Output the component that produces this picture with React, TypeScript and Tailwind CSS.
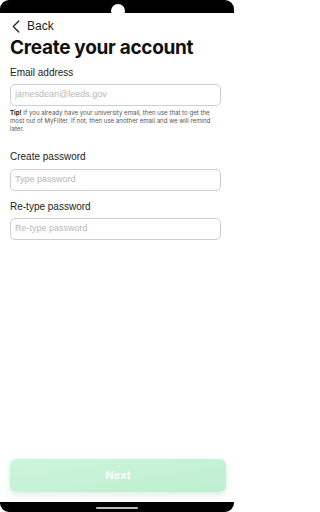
import React from "react";

const body = { fontFamily: "'Liberation Sans', Arial, sans-serif" };
const head = { fontFamily: "Inter, 'Noto Sans', sans-serif" };

function Field({ placeholder }: { placeholder: string }) {
  return (
    <div className="h-[22px] w-[211px] border border-[#cfcfcf] rounded-[5px] flex items-center px-[4px] text-[9px] text-[#b8b8b8]">
      {placeholder}
    </div>
  );
}

export default function App() {
  return (
    <div className="w-[236px] h-[512px] bg-white flex flex-col overflow-hidden relative" style={body}>
      <div className="h-[13px] w-[234px] bg-black rounded-t-[9px] shrink-0" />
      <div className="absolute left-[111px] top-[4px] w-[14px] h-[14px] rounded-full bg-white" />
      <div className="flex-1 flex flex-col px-[10px]">
        <div className="flex items-center gap-[7px] mt-[6px] h-[14px] pl-[2px] text-[#222]">
          <svg width="8" height="13" viewBox="0 0 8 13" fill="none">
            <path d="M6.8 1L1.3 6.5L6.8 12" stroke="#222" strokeWidth="1.2" strokeLinecap="round" strokeLinejoin="round" />
          </svg>
          <span className="text-[12px] leading-none">Back</span>
        </div>
        <h1 className="mt-[4px] text-[19px] leading-[22px] font-bold text-[#111] tracking-[-0.3px]" style={head}>
          Create your account
        </h1>
        <div className="mt-[8px] text-[10px] leading-[12px] text-[#222]">Email address</div>
        <div className="mt-[5px]">
          <Field placeholder="jamesdean@leeds.gov" />
        </div>
        <p className="mt-[3px] w-[214px] text-[6.1px] leading-[8px] text-[#555]" style={head}>
          <span className="font-bold text-[#222]">Tip!</span> If you already have your university email, then use that to get the most out of MyFilter. If not, then use another email and we will remind later.
        </p>
        <div className="mt-[18px] text-[10px] leading-[12px] text-[#222]">Create password</div>
        <div className="mt-[6px]">
          <Field placeholder="Type password" />
        </div>
        <div className="mt-[10px] text-[10px] leading-[12px] text-[#222]">Re-type password</div>
        <div className="mt-[5px]">
          <Field placeholder="Re-type password" />
        </div>
        <div className="flex-1" />
        <div className="mb-[10px] h-[33px] w-[216px] rounded-[6px] bg-gradient-to-br from-[#cef5dd] to-[#bdeecf] shadow-[0_3px_6px_rgba(120,200,150,0.25)] flex items-center justify-center text-white font-bold text-[11.5px]">
          Next
        </div>
      </div>
      <div className="h-[10px] w-[234px] bg-black rounded-b-[9px] shrink-0 flex justify-center pt-[5px]">
        <div className="w-[42px] h-[2px] rounded-full bg-[#bbb]" />
      </div>
    </div>
  );
}
